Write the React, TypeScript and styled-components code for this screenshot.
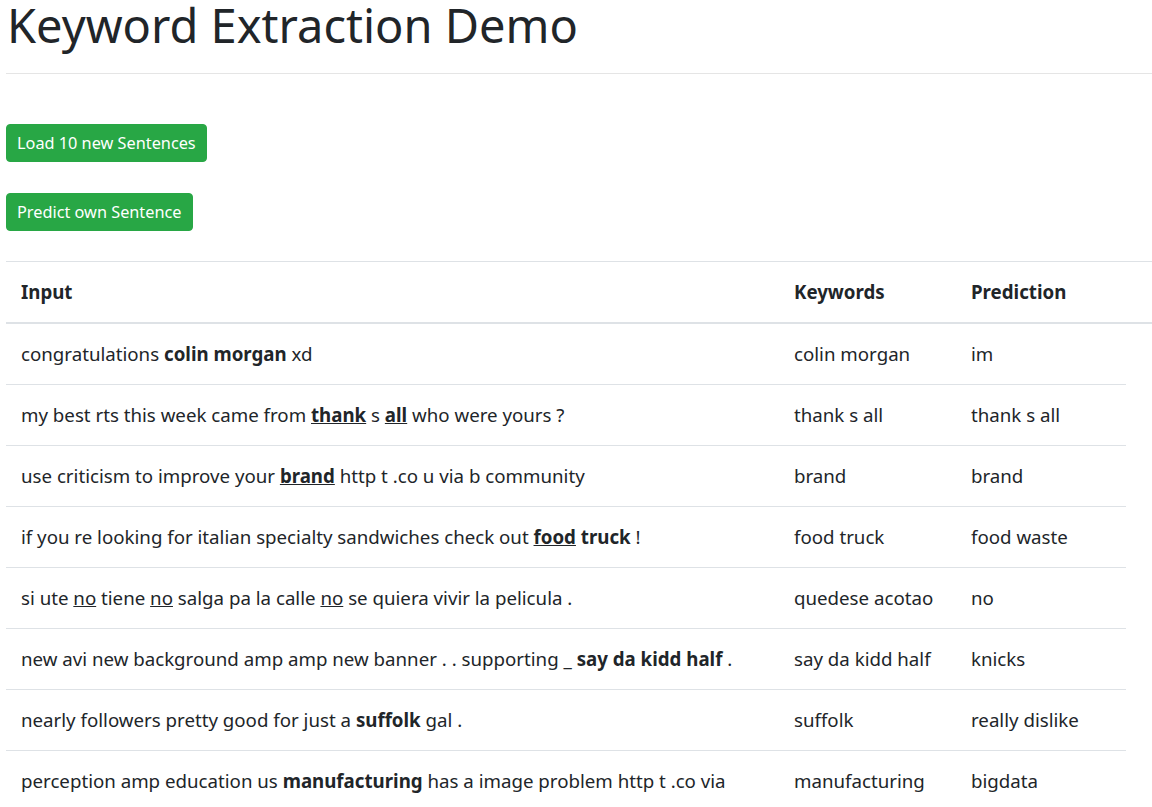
import React from "react";
import styled, { createGlobalStyle } from "styled-components";

const Global = createGlobalStyle`
  html, body { margin: 0; padding: 0; background: #fff; }
  body {
    font-family: "Noto Sans", "Open Sans", sans-serif;
    color: #212529;
    font-size: 16px;
    line-height: 1.5;
  }
`;

const Page = styled.div`
  padding-left: 6px;
  overflow: hidden;
  width: 1146px;
`;

const Title = styled.h1`
  margin: 0;
  padding-left: 1px;
  font-size: 47px;
  font-weight: 400;
  line-height: 50px;
`;

const Rule = styled.hr`
  margin: 23px 0 0;
  border: 0;
  border-top: 1px solid rgba(0, 0, 0, 0.1);
`;

const Actions = styled.div`
  display: flex;
  flex-direction: column;
  align-items: flex-start;
  gap: 31px;
  padding-top: 50px;
  padding-bottom: 30px;
`;

const Button = styled.button`
  font-family: inherit;
  font-size: 16.3px;
  line-height: 24px;
  color: #fff;
  background: #28a745;
  border: 1px solid #28a745;
  border-radius: 4px;
  padding: 6px 10px;
  height: 38px;
  cursor: pointer;
`;

const Table = styled.table`
  border-collapse: collapse;
  width: 1160px;
  font-size: 18.7px;
  line-height: 30px;
`;

const Th = styled.th`
  text-align: left;
  font-weight: 700;
  padding: 15px;
  border-top: 1px solid #dee2e6;
  border-bottom: 2px solid #dee2e6;
  vertical-align: bottom;
  white-space: nowrap;
`;

const Td = styled.td`
  padding: 15px;
  border-top: 1px solid #dee2e6;
  vertical-align: top;
  white-space: nowrap;
`;

const Key = styled.b<{ $u?: boolean }>`
  font-weight: 700;
  text-decoration: ${(p) => (p.$u ? "underline" : "none")};
`;

const U = styled.span`
  text-decoration: underline;
`;

type Row = { input: React.ReactNode; keywords: string; prediction: string };

const rows: Row[] = [
  {
    input: (
      <>
        congratulations <Key>colin morgan</Key> xd
      </>
    ),
    keywords: "colin morgan",
    prediction: "im",
  },
  {
    input: (
      <>
        my best rts this week came from <Key $u>thank</Key> s <Key $u>all</Key> who were yours ?
      </>
    ),
    keywords: "thank s all",
    prediction: "thank s all",
  },
  {
    input: (
      <>
        use criticism to improve your <Key $u>brand</Key> http t .co u via b community
      </>
    ),
    keywords: "brand",
    prediction: "brand",
  },
  {
    input: (
      <>
        if you re looking for italian specialty sandwiches check out <Key $u>food</Key> <Key>truck</Key> !
      </>
    ),
    keywords: "food truck",
    prediction: "food waste",
  },
  {
    input: (
      <>
        si ute <U>no</U> tiene <U>no</U> salga pa la calle <U>no</U> se quiera vivir la pelicula .
      </>
    ),
    keywords: "quedese acotao",
    prediction: "no",
  },
  {
    input: (
      <>
        new avi new background amp amp new banner . . supporting _ <Key>say da kidd half</Key> .
      </>
    ),
    keywords: "say da kidd half",
    prediction: "knicks",
  },
  {
    input: (
      <>
        nearly followers pretty good for just a <Key>suffolk</Key> gal .
      </>
    ),
    keywords: "suffolk",
    prediction: "really dislike",
  },
  {
    input: (
      <>
        perception amp education us <Key>manufacturing</Key> has a image problem http t .co via
      </>
    ),
    keywords: "manufacturing",
    prediction: "bigdata",
  },
];

export default function App() {
  return (
    <>
      <Global />
      <Page>
        <Title>Keyword Extraction Demo</Title>
        <Rule />
        <Actions>
          <Button>Load 10 new Sentences</Button>
          <Button>Predict own Sentence</Button>
        </Actions>
        <Table>
          <colgroup>
            <col style={{ width: 773 }} />
            <col style={{ width: 177 }} />
            <col style={{ width: 170 }} />
            <col />
          </colgroup>
          <thead>
            <tr>
              <Th>Input</Th>
              <Th>Keywords</Th>
              <Th>Prediction</Th>
              <Th />
            </tr>
          </thead>
          <tbody>
            {rows.map((r, i) => (
              <tr key={i}>
                <Td>{r.input}</Td>
                <Td>{r.keywords}</Td>
                <Td>{r.prediction}</Td>
              </tr>
            ))}
          </tbody>
        </Table>
      </Page>
    </>
  );
}
